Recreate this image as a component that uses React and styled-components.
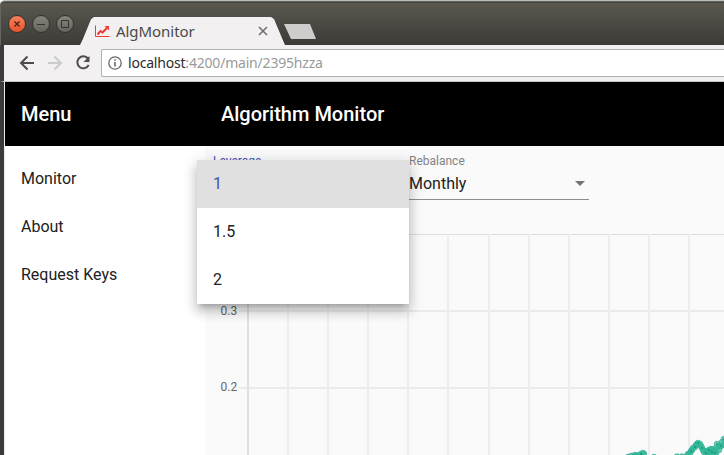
import React from "react";
import styled, { createGlobalStyle } from "styled-components";

const GlobalStyle = createGlobalStyle`
  * { box-sizing: border-box; }
  body { margin: 0; overflow: hidden; font-family: Roboto, sans-serif; }
`;

const Window = styled.div`
  width: 724px;
  height: 455px;
  overflow: hidden;
  display: flex;
  flex-direction: column;
  background: #fff;
`;

const TitleBar = styled.header`
  height: 45px;
  flex: none;
  display: flex;
  align-items: flex-start;
  padding: 14px 0 0 6px;
  border-top: 1px solid #b9bdba;
  border-radius: 5px 0 0 0;
  background: linear-gradient(#65635c 0 1px, #45443f 1px 2px, #5a574e 2px, #3c3b37 100%);
  box-shadow: inset 1px 0 #66655f;
`;

const Controls = styled.div`
  display: flex;
  gap: 6px;
  width: 74px;
  padding-left: 2px;
`;

const ControlButton = styled.button`
  width: 18px;
  height: 18px;
  padding: 0;
  border: 1px solid #35332e;
  border-radius: 50%;
  display: grid;
  place-items: center;
  background: ${(p) => (p.$close ? "linear-gradient(#f5805f, #e9542a)" : "linear-gradient(#85837b, #66645d)")};
  svg { display: block; }
`;

const Tab = styled.div`
  width: 205px;
  height: 28px;
  margin-top: 2px;
  display: flex;
  align-items: center;
  padding-left: 15px;
  background: #f2f0f1;
  clip-path: polygon(0 100%, 3px 78%, 11px 8%, 14px 0, 191px 0, 194px 7%, 204px 92%, 205px 100%);
`;

const TabTitle = styled.span`
  width: 142px;
  margin: -1px 0 0 6px;
  font: 15px/20px "Noto Sans", sans-serif;
  letter-spacing: -0.05px;
  color: #4a4a4a;
`;

const NewTab = styled.div`
  width: 32px;
  height: 15px;
  margin: 9px 0 0 -1px;
  background: #cfcdcc;
  clip-path: polygon(0 0, 26px 0, 32px 100%, 7px 100%);
`;

const Toolbar = styled.nav`
  height: 37px;
  flex: none;
  display: flex;
  padding: 4px 0 0 15px;
  border-left: 4px solid #3c3b37;
  border-bottom: 1px solid #c6c6c6;
  background: #f2f0f1;
`;

const NavIcon = styled.svg`
  width: 18px;
  height: 18px;
  margin: 5px 10px 0 0;
  flex: none;
`;

const AddressBar = styled.div`
  flex: 1;
  height: 28px;
  margin-left: -2px;
  display: flex;
  align-items: center;
  gap: 6px;
  padding-left: 6px;
  border: 1px solid #b0b0b0;
  border-right: 0;
  border-radius: 2px 0 0 2px;
  background: #fff;
  font: 14px/20px "Noto Sans", sans-serif;
  letter-spacing: -0.2px;
  color: #9a9a9a;
`;

const Host = styled.span`
  color: #2c2c2c;
`;

const Page = styled.div`
  flex: 1;
  min-height: 0;
  display: flex;
  flex-direction: column;
  border-left: 4px solid #3c3b37;
  box-shadow: inset 1px 0 #e8e8e8;
  padding-left: 1px;
`;

const AppHeader = styled.div`
  height: 64px;
  flex: none;
  display: grid;
  grid-template-columns: 200px 1fr;
  align-items: center;
  background: #000;
  color: #fff;
  font-size: 20px;
  font-weight: 500;
`;

const Heading = styled.span`
  padding-left: 16px;
`;

const Columns = styled.div`
  flex: 1;
  min-height: 0;
  display: grid;
  grid-template-columns: 200px 1fr;
`;

const SideNav = styled.div`
  padding: 8px 16px;
  background: #fff;
`;

const NavItem = styled.div`
  height: 48px;
  line-height: 49px;
  font-size: 16px;
  color: #212121;
`;

const Main = styled.main`
  min-width: 0;
  background: #fafafa;
`;

const Filters = styled.div`
  height: 78px;
  display: flex;
  gap: 16px;
  padding: 8px 0 0 8px;
`;

const Field = styled.div`
  position: relative;
  width: 180px;
  height: 46px;
  display: flex;
  flex-direction: column;
  border-bottom: 1px solid ${(p) => (p.$active ? "#3f51b5" : "#8f8f8f")};
`;

const Label = styled.span`
  font-size: 12px;
  line-height: 15px;
  color: ${(p) => (p.$active ? "#3f51b5" : "#828282")};
`;

const Value = styled.div`
  display: flex;
  align-items: center;
  justify-content: space-between;
  height: 28px;
  padding-right: 4px;
  font-size: 16px;
  color: #212121;
`;

const Dropdown = styled.div`
  position: absolute;
  z-index: 2;
  top: 6px;
  left: -16px;
  width: 212px;
  background: #fff;
  box-shadow: 0 5px 5px -3px rgba(0, 0, 0, 0.2), 0 8px 10px 1px rgba(0, 0, 0, 0.14),
    0 3px 14px 2px rgba(0, 0, 0, 0.12);
`;

const Option = styled.div`
  height: 48px;
  padding-left: 16px;
  font-size: 16px;
  line-height: 48px;
  color: ${(p) => (p.$selected ? "#3f51b5" : "#212121")};
  background: ${(p) => (p.$selected ? "#e0e0e0" : "#fff")};
`;

const Chart = styled.svg`
  display: block;
  width: 519px;
  height: 231px;
`;

const verticals = [83, 123, 163, 203, 243, 284, 324, 364, 404, 444, 484];
const points = [
  [423, 233], [426, 232], [428, 232], [430, 231], [432, 232], [434, 231], [436, 230], [438, 229], [439, 230],
  [449, 233], [472, 232.5], [477, 232.5],
  [482, 232], [483, 230], [485, 229], [486, 227], [487, 226], [488, 224], [490, 223], [491, 221], [492, 220],
  [493, 219], [495, 220], [496, 222], [497, 224], [498, 226], [499, 228], [501, 229], [502, 227], [503, 229],
  [504, 226], [505, 228], [506, 225], [507, 228], [508, 225], [509, 227], [510, 229], [511, 229],
  [512, 224], [512, 220], [514, 222], [514, 226], [516, 222], [517, 218], [518, 221], [519, 215],
];

function Plot() {
  return (
    <Chart viewBox="0 0 519 231">
      <path d="M34 10.5H519" stroke="#dedede" />
      <path d="M34 87H519M34 164H519" stroke="#ebebeb" strokeWidth="2" />
      <path d="M43 10V231" stroke="#dfdfdf" strokeWidth="2" />
      {verticals.map((x) => (
        <path key={x} d={`M${x} 10V231`} stroke="#ededed" strokeWidth="2" />
      ))}
      <g fontFamily="Roboto, sans-serif" fontSize="12" fill="#666">
        <text x="15.5" y="91">0.3</text>
        <text x="15.5" y="167">0.2</text>
      </g>
      <g fill="#35b79a" fillOpacity=".7" stroke="#2db595" strokeOpacity=".75">
        {points.map(([x, y], i) => (
          <circle key={i} cx={x} cy={y} r="2.8" />
        ))}
      </g>
      <g fill="#1a806c" fillOpacity=".6">
        {points.filter((_, i) => i % 3 === 0).map(([x, y], i) => (
          <circle key={i} cx={x} cy={y} r="1.1" />
        ))}
      </g>
    </Chart>
  );
}

export default function App() {
  return (
    <Window>
      <GlobalStyle />
      <TitleBar>
        <Controls>
          <ControlButton $close aria-label="Close">
            <svg width="8" height="8"><path d="m1.5 1.5 5 5m0-5-5 5" stroke="#552315" strokeWidth="1.4" /></svg>
          </ControlButton>
          <ControlButton aria-label="Minimize">
            <svg width="8" height="8"><path d="M0 4.5h8" stroke="#33322e" /></svg>
          </ControlButton>
          <ControlButton aria-label="Maximize">
            <svg width="8" height="8"><path d="M.5.5h7v7h-7z" fill="none" stroke="#33322e" /></svg>
          </ControlButton>
        </Controls>
        <Tab>
          <svg width="15" height="14" viewBox="0 0 15 14" fill="none" stroke="#eb3b35">
            <path d="M.5 1.500v11H14.500" />
            <path d="m2.500 10.500 3-3.500 2 1.500 4.500-4.500" strokeWidth="2" />
            <path d="M9.500 2H14v4.500z" fill="#eb3b35" stroke="none" />
          </svg>
          <TabTitle>AlgMonitor</TabTitle>
          <svg width="10" height="10"><path d="m1 1 8 8m0-8-8 8" stroke="#6c6c6c" strokeWidth="1.5" /></svg>
        </Tab>
        <NewTab />
      </TitleBar>
      <Toolbar>
        <NavIcon viewBox="0 0 18 18" fill="none" stroke="#4d4d4d" strokeWidth="2">
          <path d="M15 9H2.5M8.5 2.5 2 9l6.5 6.5" />
        </NavIcon>
        <NavIcon viewBox="0 0 18 18" fill="none" stroke="#cbcbcb" strokeWidth="2">
          <path d="M1 9h12.5M7.5 2.5 14 9l-6.5 6.5" />
        </NavIcon>
        <NavIcon viewBox="0 0 18 18" fill="none" stroke="#4d4d4d" strokeWidth="2">
          <path d="M13 4.500A6 6 0 1 0 13.700 11" />
          <path d="M14.500 2v6H8.500z" fill="#4d4d4d" stroke="none" />
        </NavIcon>
        <AddressBar>
          <svg width="14" height="14" fill="none" stroke="#696969">
            <circle cx="7" cy="7" r="6.2" strokeWidth="1.3" />
            <path d="M7 6v4.5M7 3.2v1.6" strokeWidth="1.6" />
          </svg>
          <span><Host>localhost</Host>:4200/main/2395hzza</span>
        </AddressBar>
      </Toolbar>
      <Page>
        <AppHeader>
          <Heading>Menu</Heading>
          <Heading>Algorithm Monitor</Heading>
        </AppHeader>
        <Columns>
          <SideNav>
            <NavItem>Monitor</NavItem>
            <NavItem>About</NavItem>
            <NavItem>Request Keys</NavItem>
          </SideNav>
          <Main>
            <Filters>
              <Field $active>
                <Label $active>Leverage</Label>
                <Dropdown role="listbox">
                  <Option $selected>1</Option>
                  <Option>1.5</Option>
                  <Option>2</Option>
                </Dropdown>
              </Field>
              <Field>
                <Label>Rebalance</Label>
                <Value>
                  Monthly
                  <svg width="10" height="5"><path d="M0 0h10L5 5z" fill="#757575" /></svg>
                </Value>
              </Field>
            </Filters>
            <Plot />
          </Main>
        </Columns>
      </Page>
    </Window>
  );
}
